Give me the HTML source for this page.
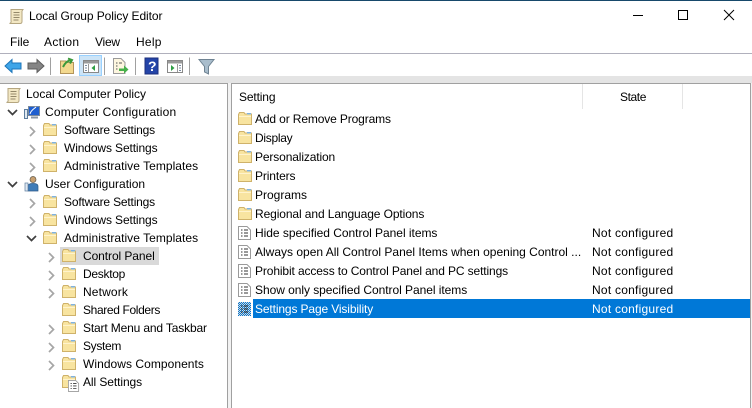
<!DOCTYPE html>
<html><head><meta charset="utf-8">
<style>
html,body{margin:0;padding:0;background:#fff}
#w{position:relative;width:752px;height:408px;overflow:hidden;background:#fff;font-family:"Liberation Sans",sans-serif;font-size:12px;color:#000}
.a{position:absolute}
.t{position:absolute;white-space:nowrap;line-height:18px;height:18px}
svg{position:absolute;left:0;top:0}
</style></head><body><div id="w">
<div class="a" style="left:0;top:0;width:752px;height:1px;background:#17496b"></div>
<div class="t" style="left:29px;top:7px;letter-spacing:-.08px">Local Group Policy Editor</div>
<div class="t" style="left:10px;top:33px">File</div>
<div class="t" style="left:44px;top:33px;letter-spacing:.33px">Action</div>
<div class="t" style="left:95px;top:33px;letter-spacing:-.25px">View</div>
<div class="t" style="left:136px;top:33px;letter-spacing:.25px">Help</div>
<div class="a" style="left:0;top:53px;width:752px;height:1px;background:#b0b0bc"></div>
<div class="a" style="left:0;top:76px;width:752px;height:7px;background:#e4e4e4"></div>
<div class="a" style="left:0;top:83px;width:752px;height:325px;background:#f2f2f2"></div>
<div class="a" style="left:0;top:83px;width:228px;height:325px;background:#fff;box-sizing:border-box;border-top:1px solid #a0a0a0;border-right:1px solid #a0a0a0"></div>
<div class="a" style="left:231px;top:83px;width:520px;height:325px;background:#fff;box-sizing:border-box;border-top:1px solid #a0a0a0;border-left:1px solid #a0a0a0;border-right:1px solid #a0a0a0"></div>
<div class="a" style="left:79px;top:55px;width:23px;height:21px;background:#cce4f7;box-sizing:border-box;border:1px solid #99d1ff"></div>
<div class="a" style="left:582px;top:84px;width:1px;height:25px;background:#e5e5e5"></div>
<div class="a" style="left:682px;top:84px;width:1px;height:25px;background:#e5e5e5"></div>
<div class="a" style="left:60px;top:247px;width:99px;height:18px;background:#d9d9d9"></div>
<div class="a" style="left:253px;top:299px;width:497px;height:19px;background:#0078d7"></div>

<div class="t" style="left:26px;top:85px">Local Computer Policy</div>
<div class="t" style="left:45px;top:103px;letter-spacing:.18px">Computer Configuration</div>
<div class="t" style="left:64px;top:121px;letter-spacing:-.18px">Software Settings</div>
<div class="t" style="left:64px;top:139px;letter-spacing:-.12px">Windows Settings</div>
<div class="t" style="left:64px;top:157px;letter-spacing:.04px">Administrative Templates</div>
<div class="t" style="left:45px;top:175px">User Configuration</div>
<div class="t" style="left:64px;top:193px;letter-spacing:-.18px">Software Settings</div>
<div class="t" style="left:64px;top:211px;letter-spacing:-.12px">Windows Settings</div>
<div class="t" style="left:64px;top:229px;letter-spacing:.04px">Administrative Templates</div>
<div class="t" style="left:83px;top:247px;letter-spacing:-.08px">Control Panel</div>
<div class="t" style="left:83px;top:265px;letter-spacing:-.28px">Desktop</div>
<div class="t" style="left:83px;top:283px;letter-spacing:.14px">Network</div>
<div class="t" style="left:83px;top:301px;letter-spacing:-.36px">Shared Folders</div>
<div class="t" style="left:83px;top:319px;letter-spacing:-.15px">Start Menu and Taskbar</div>
<div class="t" style="left:83px;top:337px;letter-spacing:-.33px">System</div>
<div class="t" style="left:83px;top:355px;letter-spacing:.05px">Windows Components</div>
<div class="t" style="left:83px;top:373px;letter-spacing:-.08px">All Settings</div>

<div class="t" style="left:239px;top:88px;letter-spacing:-.14px">Setting</div>
<div class="t" style="left:620px;top:88px;letter-spacing:-.4px">State</div>
<div class="t" style="left:255px;top:110px;letter-spacing:-.13px">Add or Remove Programs</div>
<div class="t" style="left:255px;top:129px;letter-spacing:-.28px">Display</div>
<div class="t" style="left:255px;top:148px;letter-spacing:-.13px">Personalization</div>
<div class="t" style="left:255px;top:167px;letter-spacing:-.12px">Printers</div>
<div class="t" style="left:255px;top:186px">Programs</div>
<div class="t" style="left:255px;top:205px;letter-spacing:-.1px">Regional and Language Options</div>
<div class="t" style="left:255px;top:224px;letter-spacing:-.03px">Hide specified Control Panel items</div>
<div class="t" style="left:255px;top:243px">Always open All Control Panel Items when opening Control ...</div>
<div class="t" style="left:255px;top:262px;letter-spacing:-.12px">Prohibit access to Control Panel and PC settings</div>
<div class="t" style="left:255px;top:281px;letter-spacing:-.05px">Show only specified Control Panel items</div>
<div class="t" style="left:255px;top:300px;letter-spacing:-.13px;color:#fff">Settings Page Visibility</div>
<div class="t" style="left:592px;top:224px;letter-spacing:.24px">Not configured</div>
<div class="t" style="left:592px;top:243px;letter-spacing:.24px">Not configured</div>
<div class="t" style="left:592px;top:262px;letter-spacing:.24px">Not configured</div>
<div class="t" style="left:592px;top:281px;letter-spacing:.24px">Not configured</div>
<div class="t" style="left:592px;top:300px;letter-spacing:.24px;color:#fff">Not configured</div>

<svg width="752" height="408" viewBox="0 0 752 408" shape-rendering="geometricPrecision">
<defs>
<g id="f"><path d="M.5 2.5V12.500H13.500V2H7L6 .5H1.500Z" fill="#f8e4a0" stroke="#cfb26a"/><path d="M1 4.500H13" stroke="#fff3cc"/><path d="M9 1H13V2.500H9Z" fill="#7fb2e0"/></g>
<g id="d"><path d="M.5.5H9L12.500 4V13.500H.5Z" fill="#fff" stroke="#9a9a9a"/><path d="M3 4h1.500M6 4h4M3 7h1.500M6 7h4M3 10h1.500M6 10h4" stroke="#333" stroke-width="1"/></g>
<path id="r" d="M0 0L4.500 4.500L0 9" fill="none" stroke="#a6a6a6" stroke-width="1.700"/>
<path id="e" d="M0 0L4.500 4.500L9 0" fill="none" stroke="#404040" stroke-width="1.700"/>
<g id="s"><path d="M3 1.500H15L14 3V13.500C14 15 13 15.500 12 15.500H1.500C3 15 3.500 14 3 12.500Z" fill="#f3e8c4" stroke="#b5a680"/><path d="M5.500 4.500h6M5.500 7h6M5.500 9.500h6M5.500 12h5" stroke="#94896a"/></g>
<pattern id="p" width="2" height="2" patternUnits="userSpaceOnUse"><rect width="2" height="2" fill="#0078d7"/><rect width="1" height="1" fill="#d8d8d8"/><rect x="1" y="1" width="1" height="1" fill="#d8d8d8"/></pattern>
</defs>

<!-- window controls -->
<path d="M633 15.500H643" stroke="#000"/>
<rect x="678.500" y="10.500" width="9" height="9" fill="none" stroke="#000"/>
<path d="M724 10L734 20M734 10L724 20" stroke="#000"/>

<!-- app icon -->
<use href="#s" transform="translate(8,8)"/>

<!-- toolbar -->
<path d="M5 66L12 59.500V63H21V69H12V72.500Z" fill="#3fa5e8" stroke="#1c74b8"/>
<path d="M44 66L37 59.500V63H28V69H37V72.500Z" fill="#858585" stroke="#5d5d5d"/>
<path d="M50.500 57.500V75M104.500 57.500V75M135.500 57.500V75M189.500 57.500V75" stroke="#a0a0a0"/>
<path d="M60.500 64.500V73.500H73.500V62.500H67L66 61H60.500Z" fill="#f3d98f" stroke="#b3955b"/>
<path d="M63 67C65 63 67 61 71 60M68 58.500L72 60L70 63.500" fill="none" stroke="#3b9a3b" stroke-width="2"/>
<rect x="83.500" y="60.500" width="15" height="12" fill="#fff" stroke="#888"/><rect x="84" y="61" width="14" height="2.500" fill="#9a9a9a"/><path d="M88.500 64V72" stroke="#999"/><path d="M85 65.500h2M85 68h2M85 70.500h2" stroke="#7a8aa0"/><path d="M95 65V71L91.500 68Z" fill="#2f9e44"/>
<path d="M113.500 58.500H121L125 62.500V73.500H113.500Z" fill="#fdf6df" stroke="#9a9a9a"/>
<path d="M116 63h1.500M119 63h3M116 66h1.500M116 69h1.500" stroke="#555"/>
<path d="M119 68.500H124V65.500L128.500 69.500L124 73.500V71H119Z" fill="#46b04a"/>
<rect x="145" y="58" width="13" height="16" fill="#2444a8" stroke="#1c2f7d"/>
<text x="148" y="71" font-family="Liberation Sans,sans-serif" font-size="14" font-weight="bold" fill="#fff">?</text>
<rect x="167.500" y="60.500" width="15" height="12" fill="#fff" stroke="#888"/><rect x="168" y="61" width="14" height="2.500" fill="#9a9a9a"/>
<path d="M177.500 64V72" stroke="#999"/><path d="M179 65.500h2M179 68h2M179 70.500h2" stroke="#7a8aa0"/><path d="M171 65V71L174.500 68Z" fill="#2f9e44"/>
<path d="M199 59.500H214L208.500 66.500V74L204.500 72V66.500Z" fill="#a9bdcc" stroke="#6f8393"/>

<!-- tree icons -->
<use href="#s" transform="translate(5,87)"/>
<use href="#e" transform="translate(8,110)"/>
<use href="#e" transform="translate(8,182)"/>
<use href="#e" transform="translate(27,236)"/>
<!-- computer -->
<rect x="28.500" y="106.500" width="11" height="9" fill="#1f5fd0" stroke="#7b8a9c"/>
<path d="M30 114C31 110 34 109 36 107" stroke="#fff" fill="none"/>
<path d="M31 117.500H38" stroke="#8a96a4" stroke-width="2"/>
<rect x="24.500" y="109.500" width="3" height="9" fill="#dfe8f0" stroke="#5d7d9e"/>
<!-- user -->
<circle cx="33" cy="179.500" r="3" fill="#c8a070" stroke="#60584a" stroke-width=".7"/>
<path d="M28 191V186C28 184 30 183.500 33 183.500S38 184 38 186V191Z" fill="#3f7cb8" stroke="#2c5a88" stroke-width=".7"/>
<rect x="25" y="183" width="3" height="8" fill="#dfe8f0" stroke="#5d7d9e" stroke-width=".7"/>
<use href="#r" transform="translate(30,127)"/>
<use href="#r" transform="translate(30,145)"/>
<use href="#r" transform="translate(30,163)"/>
<use href="#r" transform="translate(30,199)"/>
<use href="#r" transform="translate(30,217)"/>
<use href="#r" transform="translate(49,253)"/>
<use href="#r" transform="translate(49,271)"/>
<use href="#r" transform="translate(49,289)"/>
<use href="#r" transform="translate(49,325)"/>
<use href="#r" transform="translate(49,343)"/>
<use href="#r" transform="translate(49,361)"/>
<use href="#f" transform="translate(43,123)"/>
<use href="#f" transform="translate(43,141)"/>
<use href="#f" transform="translate(43,159)"/>
<use href="#f" transform="translate(43,195)"/>
<use href="#f" transform="translate(43,213)"/>
<use href="#f" transform="translate(43,231)"/>
<use href="#f" transform="translate(62,249)"/>
<use href="#f" transform="translate(62,267)"/>
<use href="#f" transform="translate(62,285)"/>
<use href="#f" transform="translate(62,303)"/>
<use href="#f" transform="translate(62,321)"/>
<use href="#f" transform="translate(62,339)"/>
<use href="#f" transform="translate(62,357)"/>
<use href="#f" transform="translate(62,375)"/>
<g transform="translate(68,380) scale(.85)"><use href="#d"/></g>

<!-- list icons -->
<use href="#f" transform="translate(238,112)"/>
<use href="#f" transform="translate(238,131)"/>
<use href="#f" transform="translate(238,150)"/>
<use href="#f" transform="translate(238,169)"/>
<use href="#f" transform="translate(238,188)"/>
<use href="#f" transform="translate(238,207)"/>
<use href="#d" transform="translate(238,226)"/>
<use href="#d" transform="translate(238,245)"/>
<use href="#d" transform="translate(238,264)"/>
<use href="#d" transform="translate(238,283)"/>
<rect x="238" y="302" width="13" height="14" fill="url(#p)"/>
<path d="M241 306h1.500M244 306h4M241 309h1.500M244 309h4M241 312h1.500M244 312h4" stroke="#222"/>
</svg>
</div></body></html>
